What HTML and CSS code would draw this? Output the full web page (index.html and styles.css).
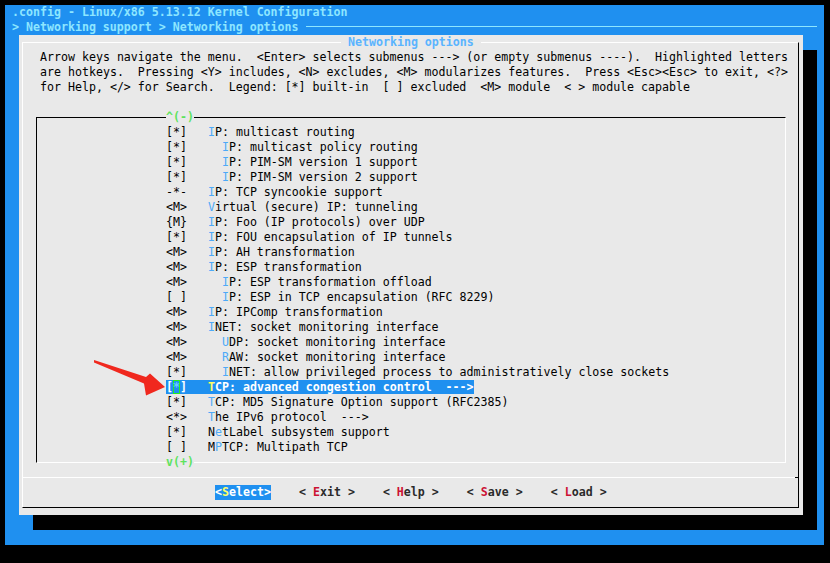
FILE: index.html
```html
<!DOCTYPE html>
<html>
<head>
<meta charset="utf-8">
<link rel="stylesheet" href="styles.css">
</head>
<body>
<div class="screen">
  <div class="backtitle">.config - Linux/x86 5.13.12 Kernel Configuration</div>
  <div class="subtitle"><span>&gt; Networking support &gt; Networking options</span><span class="hline"></span></div>
  <div class="dialog">
    <div class="frame">
      <div class="title"> Networking options </div>
      <div class="help">Arrow keys navigate the menu.  &lt;Enter&gt; selects submenus ---&gt; (or empty submenus ----).  Highlighted letters
are hotkeys.  Pressing &lt;Y&gt; includes, &lt;N&gt; excludes, &lt;M&gt; modularizes features.  Press &lt;Esc&gt;&lt;Esc&gt; to exit, &lt;?&gt;
for Help, &lt;/&gt; for Search.  Legend: [*] built-in  [ ] excluded  &lt;M&gt; module  &lt; &gt; module capable</div>
      <div class="menubox">
        <div class="scroll up">^(-)</div>
        <div class="item">[*]   <span class="hk">I</span>P: multicast routing</div>
        <div class="item">[*]     <span class="hk">I</span>P: multicast policy routing</div>
        <div class="item">[*]     <span class="hk">I</span>P: PIM-SM version 1 support</div>
        <div class="item">[*]     <span class="hk">I</span>P: PIM-SM version 2 support</div>
        <div class="item">-*-   <span class="hk">I</span>P: TCP syncookie support</div>
        <div class="item">&lt;M&gt;   <span class="hk">V</span>irtual (secure) IP: tunneling</div>
        <div class="item">{M}   <span class="hk">I</span>P: Foo (IP protocols) over UDP</div>
        <div class="item">[*]   <span class="hk">I</span>P: FOU encapsulation of IP tunnels</div>
        <div class="item">&lt;M&gt;   <span class="hk">I</span>P: AH transformation</div>
        <div class="item">&lt;M&gt;   <span class="hk">I</span>P: ESP transformation</div>
        <div class="item">&lt;M&gt;     <span class="hk">I</span>P: ESP transformation offload</div>
        <div class="item">[ ]     <span class="hk">I</span>P: ESP in TCP encapsulation (RFC 8229)</div>
        <div class="item">&lt;M&gt;   <span class="hk">I</span>P: IPComp transformation</div>
        <div class="item">&lt;M&gt;   <span class="hk">I</span>NET: socket monitoring interface</div>
        <div class="item">&lt;M&gt;     <span class="hk">U</span>DP: socket monitoring interface</div>
        <div class="item">&lt;M&gt;     <span class="hk">R</span>AW: socket monitoring interface</div>
        <div class="item">[*]     <span class="hk">I</span>NET: allow privileged process to administratively close sockets</div>
        <div class="item"><span class="sel">[<span class="cur">*</span>]   <span class="hk">T</span>CP: advanced congestion control  ---&gt;</span></div>
        <div class="item">[*]   <span class="hk">T</span>CP: MD5 Signature Option support (RFC2385)</div>
        <div class="item">&lt;*&gt;   <span class="hk">T</span>he IPv6 protocol  ---&gt;</div>
        <div class="item">[*]   N<span class="hk">e</span>tLabel subsystem support</div>
        <div class="item">[ ]   M<span class="hk">P</span>TCP: Multipath TCP</div>
        <div class="scroll down">v(+)</div>
      </div>
      <div class="sep"></div>
      <div class="buttons">
        <span class="btn active">&lt;<span class="bk">S</span>elect&gt;</span>
        <span class="btn">&lt; <span class="bk">E</span>xit &gt;</span>
        <span class="btn">&lt; <span class="bk">H</span>elp &gt;</span>
        <span class="btn">&lt; <span class="bk">S</span>ave &gt;</span>
        <span class="btn">&lt; <span class="bk">L</span>oad &gt;</span>
      </div>
    </div>
  </div>
</div>
<svg class="arrow" width="830" height="563" viewBox="0 0 830 563">
  <polygon points="94,360 146,377 150,373.5 165,387 146,395.5 144,383.5 94,362.5" fill="#f0281e"/>
</svg>
</body>
</html>
```

FILE: styles.css
```css
* { box-sizing: border-box; }
html, body { margin: 0; padding: 0; background: #000; }
body {
  width: 830px;
  height: 563px;
  overflow: hidden;
  position: relative;
  font-family: "DejaVu Sans Mono", monospace;
  font-size: 11.627px;
  line-height: 15px;
}
.screen {
  margin: 5px 0 0 5px;
  width: 819px;
  height: 540px;
  background: #1f90f0;
  overflow: visible;
  padding-top: 0;
}
.backtitle {
  height: 15px;
  padding-left: 7px;
  color: #8de6ff;
  font-weight: bold;
  white-space: pre;
}
.subtitle {
  display: flex;
  height: 15px;
  padding: 0 7px;
  color: #8de6ff;
  font-weight: bold;
  white-space: pre;
}
.hline {
  flex: 1;
  height: 1px;
  margin-top: 6px;
  margin-left: 7px;
  background: #8de6ff;
}
.dialog {
  margin-left: 14px;
  width: 784px;
  height: 480px;
  background: #e9e9e9;
  padding: 7px 4px 7px 3px;
  box-shadow: 14px 15px 0 #000;
}
.frame {
  position: relative;
  height: 466px;
  border-top: 1px solid #fff;
  border-left: 1px solid #fff;
  border-right: 1px solid #000;
  border-bottom: 1px solid #000;
  padding-top: 7px;
  color: #000;
}
.title {
  position: absolute;
  top: -8px;
  left: 318px;
  background: #e9e9e9;
  color: #5ab4ff;
  font-weight: bold;
  white-space: pre;
}
.help {
  height: 45px;
  padding-left: 17px;
  white-space: pre;
}
.menubox {
  position: relative;
  margin-top: 22px;
  margin-left: 13px;
  width: 750px;
  height: 346px;
  border-top: 1px solid #000;
  border-left: 1px solid #000;
  border-right: 1px solid #fff;
  border-bottom: 1px solid #fff;
  padding: 7px 0 7px 129px;
}
.scroll {
  position: absolute;
  left: 129px;
  background: #e9e9e9;
  color: #5de35d;
  font-weight: bold;
}
.scroll.up { top: -8px; }
.scroll.down { bottom: -8px; }
.item {
  height: 15px;
  white-space: pre;
}
.hk { color: #4ea9f7; }
.sel {
  background: #1f90f0;
  color: #fff;
  font-weight: bold;
}
.sel .hk { color: #ffff66; }
.cur {
  color: #66ccff;
  box-shadow: inset 0 0 0 1px #22ee22;
}
.sep {
  position: relative;
  margin-top: 14px;
  height: 1px;
  background: #fff;
}
.sep::after {
  content: "";
  position: absolute;
  right: 0;
  top: 0;
  width: 3px;
  height: 1px;
  background: #000;
}
.buttons {
  display: flex;
  gap: 28px;
  margin-top: 7px;
  height: 15px;
  padding-left: 192px;
  white-space: pre;
  font-weight: bold;
  color: #2b2b2b;
}
.bk { color: #cc1133; }
.btn.active {
  background: #1f90f0;
  color: #fff;
}
.btn.active .bk { color: #ffff66; }
.arrow {
  position: absolute;
  left: 0;
  top: 0;
  pointer-events: none;
}
```
